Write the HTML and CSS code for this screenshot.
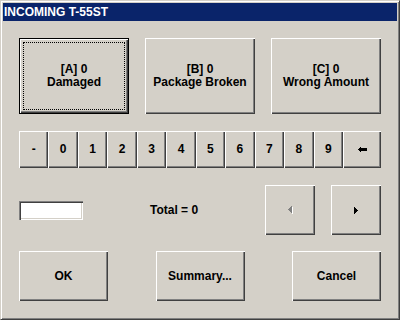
FILE: index.html
```html
<!DOCTYPE html>
<html lang="en">

<head>
    <meta charset="UTF-8">
    <title>Incoming T-55ST</title>
    <link rel="stylesheet" href="styles.css">
</head>

<body>
    <div class="ventana">
        <div class="titulo">INCOMING T-55ST</div>

        <div class="contenido">
            <div class="motivos">
                <button class="boton grande por-defecto">[A] 0<br>Damaged</button>
                <button class="boton grande">[B] 0<br>Package Broken</button>
                <button class="boton grande">[C] 0<br>Wrong Amount</button>
            </div>

            <div class="teclado">
                <button class="boton tecla">-</button>
                <button class="boton tecla">0</button>
                <button class="boton tecla">1</button>
                <button class="boton tecla">2</button>
                <button class="boton tecla">3</button>
                <button class="boton tecla">4</button>
                <button class="boton tecla">5</button>
                <button class="boton tecla">6</button>
                <button class="boton tecla">7</button>
                <button class="boton tecla">8</button>
                <button class="boton tecla">9</button>
                <button class="boton tecla">
                    <svg width="9" height="5" viewBox="0 0 9 5" shape-rendering="crispEdges">
                        <path d="M2 0h1v5h-1z M1 1h8v3h-8z M0 2h1v1h-1z" fill="#000" />
                    </svg>
                </button>
            </div>

            <div class="fila-total">
                <input type="text" class="cantidad">
                <span class="total">Total = 0</span>
                <div class="flechas">
                    <button class="boton flecha" disabled>
                        <svg width="5" height="8" viewBox="0 0 5 8" shape-rendering="crispEdges">
                            <path d="M4 1h1v7h-1z" fill="#fff" />
                            <path d="M3 0h1v7h-1z M2 1h1v5h-1z M1 2h1v3h-1z M0 3h1v1h-1z" fill="#808080" />
                        </svg>
                    </button>
                    <button class="boton flecha">
                        <svg width="4" height="7" viewBox="0 0 4 7" shape-rendering="crispEdges">
                            <path d="M0 0h1v7h-1z M1 1h1v5h-1z M2 2h1v3h-1z M3 3h1v1h-1z" fill="#000" />
                        </svg>
                    </button>
                </div>
            </div>

            <div class="acciones">
                <button class="boton accion">OK</button>
                <button class="boton accion">Summary...</button>
                <button class="boton accion">Cancel</button>
            </div>
        </div>
    </div>
</body>

</html>
```

FILE: styles.css
```css
body {
    margin: 0;
    font-family: "Liberation Sans", Arial, sans-serif;
    background-color: #d4d0c8;
}

.ventana {
    width: 400px;
    height: 320px;
    box-sizing: border-box;
    border: 1px solid;
    border-color: #d4d0c8 #404040 #404040 #d4d0c8;
    box-shadow: inset 1px 1px #fff, inset -1px -1px #808080;
    padding: 2px;
    background-color: #d4d0c8;
    display: flex;
    flex-direction: column;
}

.titulo {
    height: 18px;
    line-height: 18px;
    padding-left: 1px;
    background-color: #0a246a;
    color: white;
    font-size: 12px;
    font-weight: bold;
}

.contenido {
    flex: 1;
    display: flex;
    flex-direction: column;
    padding: 17px 16px 16px;
}

.boton {
    font-family: inherit;
    font-size: 12px;
    font-weight: bold;
    line-height: 13px;
    color: #000;
    background-color: #d4d0c8;
    border: none;
    padding: 0;
    margin: 0;
    box-shadow: inset 1px 1px #fff, inset -1px -1px #404040, inset -2px -2px #808080;
    display: flex;
    align-items: center;
    justify-content: center;
    text-align: center;
}

.motivos {
    display: grid;
    grid-template-columns: repeat(3, 110px);
    justify-content: space-between;
    height: 76px;
}

.por-defecto {
    position: relative;
    border: 1px solid #000;
}

/* rectangulo punteado del foco */
.por-defecto::after {
    content: "";
    position: absolute;
    inset: 3px;
    border: 1px dotted #000;
}

.teclado {
    display: grid;
    grid-template-columns: repeat(11, 1fr) 38px;
    height: 37px;
    margin-top: 17px;
}

.fila-total {
    display: flex;
    align-items: center;
    height: 50px;
    margin-top: 17px;
}

.cantidad {
    width: 64px;
    height: 19px;
    box-sizing: border-box;
    border: none;
    padding: 0;
    margin: 0;
    background: white;
    box-shadow: inset 1px 1px #808080, inset 2px 2px #404040, inset -1px -1px #fff, inset -2px -2px #d4d0c8;
}

.total {
    margin-left: 67px;
    font-size: 12px;
    font-weight: bold;
}

.flechas {
    margin-left: auto;
    display: flex;
    gap: 16px;
}

.flecha {
    width: 50px;
    height: 50px;
}

.acciones {
    display: flex;
    justify-content: space-between;
    height: 50px;
    margin-top: 16px;
}

.accion {
    width: 89px;
}
```
